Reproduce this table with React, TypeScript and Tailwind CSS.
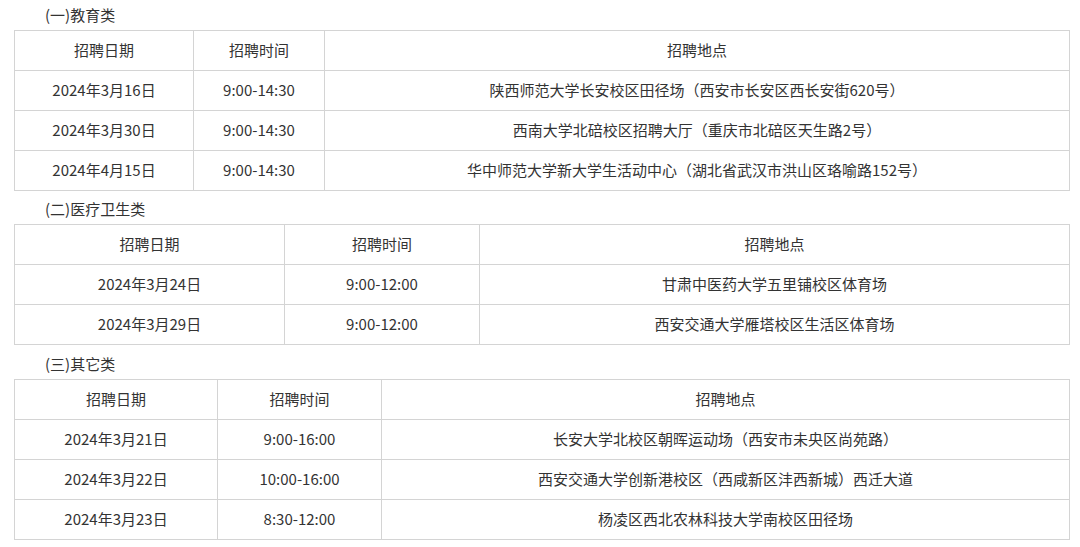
import React from "react";

type Section = {
  title: string;
  mt: string;
  widths: [string, string, string];
  rows: [string, string, string][];
};

const sections: Section[] = [
  {
    title: "(一)教育类",
    mt: "",
    widths: ["w-[179px]", "w-[131px]", "w-[745px]"],
    rows: [
      ["2024年3月16日", "9:00-14:30", "陕西师范大学长安校区田径场（西安市长安区西长安街620号）"],
      ["2024年3月30日", "9:00-14:30", "西南大学北碚校区招聘大厅（重庆市北碚区天生路2号）"],
      ["2024年4月15日", "9:00-14:30", "华中师范大学新大学生活动中心（湖北省武汉市洪山区珞喻路152号）"],
    ],
  },
  {
    title: "(二)医疗卫生类",
    mt: "mt-[3px]",
    widths: ["w-[270px]", "w-[195px]", "w-[590px]"],
    rows: [
      ["2024年3月24日", "9:00-12:00", "甘肃中医药大学五里铺校区体育场"],
      ["2024年3月29日", "9:00-12:00", "西安交通大学雁塔校区生活区体育场"],
    ],
  },
  {
    title: "(三)其它类",
    mt: "mt-[4px]",
    widths: ["w-[203px]", "w-[164px]", "w-[688px]"],
    rows: [
      ["2024年3月21日", "9:00-16:00", "长安大学北校区朝晖运动场（西安市未央区尚苑路）"],
      ["2024年3月22日", "10:00-16:00", "西安交通大学创新港校区（西咸新区沣西新城）西迁大道"],
      ["2024年3月23日", "8:30-12:00", "杨凌区西北农林科技大学南校区田径场"],
    ],
  },
];

const cell = "border border-[#d4d4d4] h-[40px] p-0 text-center align-middle";

export default function App() {
  return (
    <div
      className="w-[1080px] h-[547px] bg-white text-[#333333] text-[15px] overflow-hidden"
      style={{ fontFamily: '"Noto Sans CJK SC", "Noto Sans", sans-serif' }}
    >
      <div className="pl-[14px] pr-[11px]">
        {sections.map((s) => (
          <div key={s.title} className={s.mt}>
            <div className="pl-[31px] h-[30px] leading-[30px]">{s.title}</div>
            <table className="w-[1055px] table-fixed border-collapse">
              <colgroup>
                <col className={s.widths[0]} />
                <col className={s.widths[1]} />
                <col className={s.widths[2]} />
              </colgroup>
              <tbody>
                <tr>
                  <td className={cell}>招聘日期</td>
                  <td className={cell}>招聘时间</td>
                  <td className={cell}>招聘地点</td>
                </tr>
                {s.rows.map((r) => (
                  <tr key={r[0]}>
                    <td className={cell}>{r[0]}</td>
                    <td className={cell}>{r[1]}</td>
                    <td className={cell}>{r[2]}</td>
                  </tr>
                ))}
              </tbody>
            </table>
          </div>
        ))}
      </div>
    </div>
  );
}
